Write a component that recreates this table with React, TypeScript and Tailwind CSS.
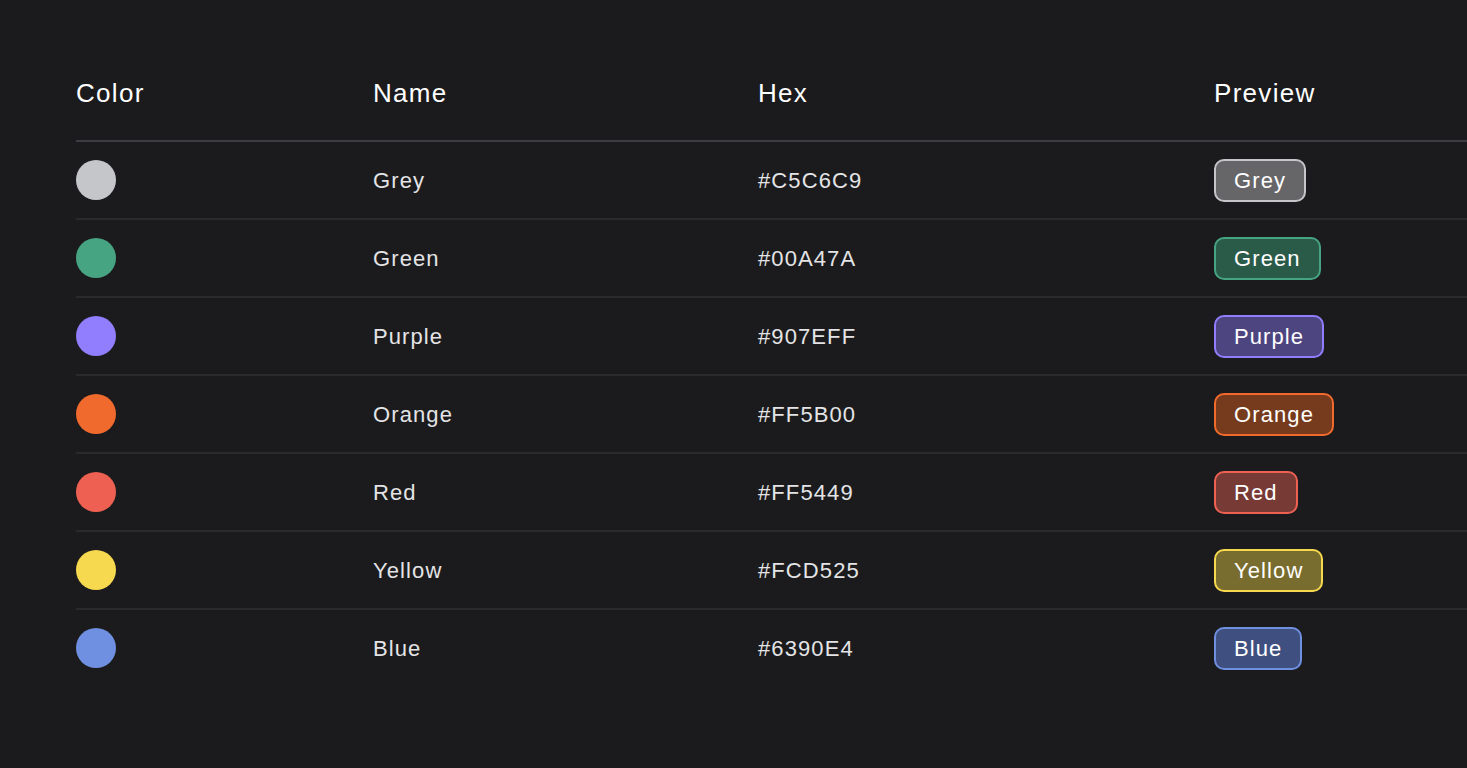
import React from "react";

type Row = {
  name: string;
  hex: string;
  dot: string;
  badge: string;
};

const rows: Row[] = [
  { name: "Grey", hex: "#C5C6C9", dot: "bg-[#c5c6c9]", badge: "bg-[#666669] border-[#c5c6c9]" },
  { name: "Green", hex: "#00A47A", dot: "bg-[#47a482]", badge: "bg-[#2a5b49] border-[#47a482]" },
  { name: "Purple", hex: "#907EFF", dot: "bg-[#907eff]", badge: "bg-[#4d4580] border-[#907eff]" },
  { name: "Orange", hex: "#FF5B00", dot: "bg-[#f06a2e]", badge: "bg-[#763b1c] border-[#f06a2e]" },
  { name: "Red", hex: "#FF5449", dot: "bg-[#ee6152]", badge: "bg-[#773a35] border-[#ee6152]" },
  { name: "Yellow", hex: "#FCD525", dot: "bg-[#f6d94f]", badge: "bg-[#786c2f] border-[#f6d94f]" },
  { name: "Blue", hex: "#6390E4", dot: "bg-[#6f8fe0]", badge: "bg-[#3f5080] border-[#6f8fe0]" },
];

export default function App() {
  return (
    <div
      className="min-h-[768px] w-full overflow-hidden bg-[#1b1b1d] pl-[76px] pt-[46px]"
      style={{ fontFamily: '"Liberation Sans", Arial, sans-serif' }}
    >
      <div className="grid h-[96px] grid-cols-[297px_385px_456px_1fr] items-center border-b-2 border-[#3c3c42] text-[26px] tracking-[0.05em] text-white">
        <div>Color</div>
        <div>Name</div>
        <div>Hex</div>
        <div>Preview</div>
      </div>
      {rows.map((r, i) => (
        <div
          key={r.name}
          className={`grid grid-cols-[297px_385px_456px_1fr] items-center text-[22px] tracking-[0.05em] text-[#e4e4e6] ${
            i < rows.length - 1 ? "h-[78px] border-b-2 border-[#2a2a2d]" : "h-[76px]"
          }`}
        >
          <div>
            <div className={`h-10 w-10 rounded-full ${r.dot}`} />
          </div>
          <div>{r.name}</div>
          <div>{r.hex}</div>
          <div>
            <span
              className={`inline-flex h-[43px] items-center rounded-[10px] border-2 px-[18px] text-white ${r.badge}`}
            >
              {r.name}
            </span>
          </div>
        </div>
      ))}
    </div>
  );
}
